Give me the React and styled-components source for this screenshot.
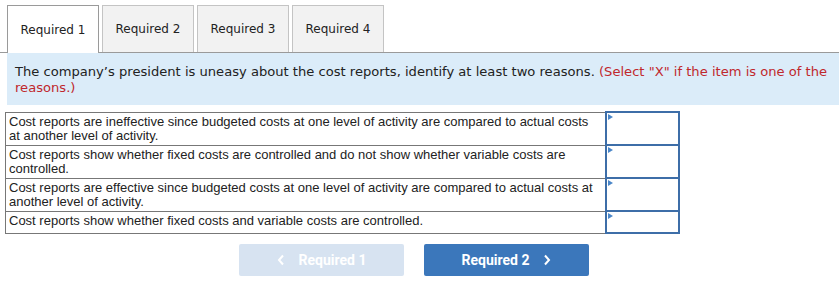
import React from 'react'
import styled, { createGlobalStyle } from 'styled-components'

const GlobalStyle = createGlobalStyle`
    body {
        margin: 0;
        background: white;
    }
`;

const Page = styled.div`
    padding: 5px 0 0 0;
    width: 839px;
`;

const Tabs = styled.div`
    display: flex;
    gap: 3px;
    padding-left: 7px;
    border-bottom: 1px solid #9a9a9a;
    height: 47px;
    align-items: stretch;
`;

const Tab = styled.div`
    width: 92px;
    box-sizing: border-box;
    display: flex;
    align-items: center;
    justify-content: center;
    font-family: "DejaVu Sans", Verdana, sans-serif;
    font-size: 12px;
    color: #222;
    border: 1px solid #c4c4c4;
    background: ${props => props.active ? '#fff' : '#f2f2f2'};
    border-bottom: none;
    margin-bottom: ${props => props.active ? '-1px' : '0'};
    ${props => props.active && 'border-color: #9a9a9a;'}
`;

const Prompt = styled.div`
    margin-left: 7px;
    background: #dbecf9;
    padding: 11px 8px 9px 8px;
    font-family: "DejaVu Sans", Verdana, sans-serif;
    font-size: 13.1px;
    line-height: 16px;
    color: #222;
`;

const Hint = styled.span`
    color: #c0282d;
`;

const Table = styled.table`
    margin: 6px 0 0 5px;
    border-collapse: collapse;
    font-family: "Liberation Sans", Arial, sans-serif;
    font-size: 13px;
    line-height: 14px;
    color: #222;
`;

const TextCell = styled.td`
    width: 588px;
    border: 1px solid #777;
    padding: 2px 8px 2px 3px;
    vertical-align: top;
`;

const InputCell = styled.td`
    width: 71px;
    height: 20px;
    border: 2px solid #3d6ea8;
    padding: 0;
    position: relative;
`;

const Marker = styled.span`
    position: absolute;
    left: 1px;
    top: 1px;
    width: 0;
    height: 0;
    border-top: 3px solid transparent;
    border-bottom: 3px solid transparent;
    border-left: 5px solid #4a86c8;
`;

const Nav = styled.div`
    display: flex;
    gap: 20px;
    margin: 10px 0 0 239px;
`;

const NavButton = styled.div`
    width: 165px;
    height: 32px;
    border-radius: 2px;
    display: flex;
    align-items: center;
    justify-content: center;
    gap: 14px;
    font-family: Roboto, "Liberation Sans", sans-serif;
    font-weight: bold;
    font-size: 14px;
    color: white;
    background: ${props => props.disabled ? '#d7e3f1' : '#3b77bb'};
`;

const Chevron = ({ dir }) => (
    <svg width="8" height="12" viewBox="0 0 8 12">
        <path
            d={dir === 'left' ? 'M6 1.5 L2 6 L6 10.5' : 'M2 1.5 L6 6 L2 10.5'}
            fill="none"
            stroke="white"
            strokeWidth="2"
        />
    </svg>
);

const rows = [
    'Cost reports are ineffective since budgeted costs at one level of activity are compared to actual costs at another level of activity.',
    'Cost reports show whether fixed costs are controlled and do not show whether variable costs are controlled.',
    'Cost reports are effective since budgeted costs at one level of activity are compared to actual costs at another level of activity.',
    'Cost reports show whether fixed costs and variable costs are controlled.',
];

const App = () => {
    return (
        <Page>
            <GlobalStyle />
            <Tabs>
                <Tab active>Required 1</Tab>
                <Tab>Required 2</Tab>
                <Tab>Required 3</Tab>
                <Tab>Required 4</Tab>
            </Tabs>
            <Prompt>
                The company’s president is uneasy about the cost reports, identify at least two reasons.{' '}
                <Hint>(Select "X" if the item is one of the reasons.)</Hint>
            </Prompt>
            <Table>
                <tbody>
                    {rows.map((r, i) => (
                        <tr key={i}>
                            <TextCell>{r}</TextCell>
                            <InputCell><Marker /></InputCell>
                        </tr>
                    ))}
                </tbody>
            </Table>
            <Nav>
                <NavButton disabled><Chevron dir="left" />Required 1</NavButton>
                <NavButton>Required 2<Chevron dir="right" /></NavButton>
            </Nav>
        </Page>
    )
}

export default App;
